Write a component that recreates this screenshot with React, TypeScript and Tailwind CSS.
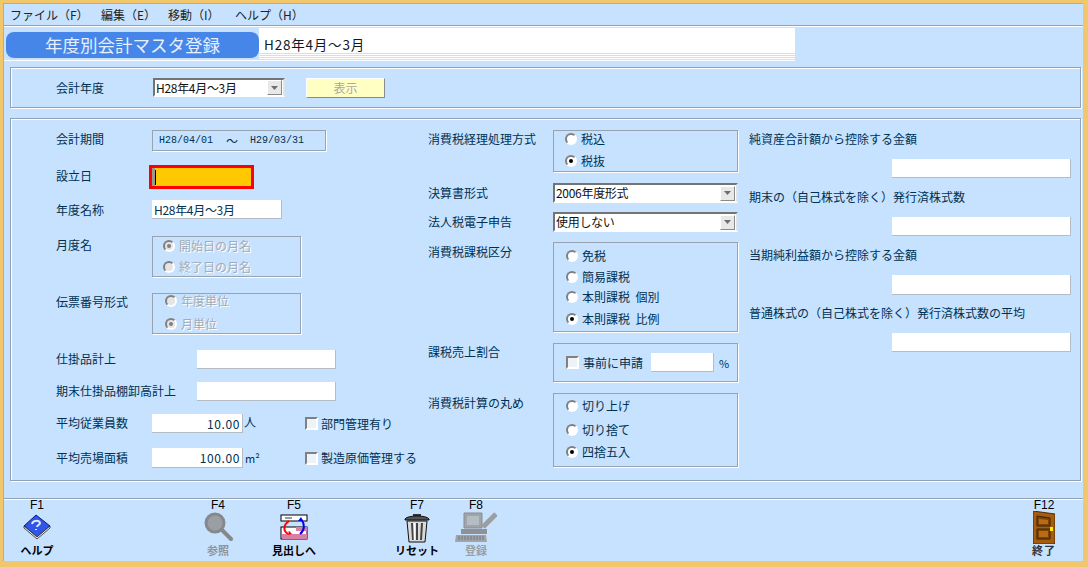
import React from "react";

const jp = "font-['Noto_Sans_CJK_JP',sans-serif]";

const Radio = ({ on = false, off = false }: { on?: boolean; off?: boolean }) => (
  <span
    className={`flex h-[12px] w-[12px] shrink-0 items-center justify-center rounded-full border-2 border-t-[#808080] border-l-[#808080] border-r-white border-b-white ${
      off ? "bg-[#e4e4e4]" : "bg-white"
    }`}
  >
    {on && (
      <span className={`h-[4px] w-[4px] rounded-full ${off ? "bg-[#808080]" : "bg-black"}`} />
    )}
  </span>
);

const RadioItem = ({
  label,
  on,
  off,
  className = "",
}: {
  label: string;
  on?: boolean;
  off?: boolean;
  className?: string;
}) => (
  <div className={`flex h-[14px] items-center gap-[4px] ${className}`}>
    <Radio on={on} off={off} />
    <span className={off ? "text-[#a3abb3] [text-shadow:1px_1px_0_#ffffff]" : ""}>{label}</span>
  </div>
);

const Check = () => (
  <span className="h-[13px] w-[13px] shrink-0 border-2 border-t-[#808080] border-l-[#808080] border-r-white border-b-white bg-[#eef3f8]" />
);

const Field = ({ className = "", value }: { className?: string; value?: string }) => (
  <div
    className={`flex items-center justify-end bg-white pr-[3px] tracking-[0.6px] shadow-[inset_-1px_-1px_0_#b4bcc6] ${className}`}
  >
    {value}
  </div>
);

const Select = ({ value, className = "" }: { value: string; className?: string }) => (
  <div
    className={`flex items-center border-2 border-t-[#747474] border-l-[#747474] border-r-[#dfe3e8] border-b-white bg-white pl-[1px] pr-[1px] ${className}`}
  >
    <span className="flex-1 leading-[14px] tracking-[-0.3px]">{value}</span>
    <span className="flex h-[15px] w-[15px] items-center justify-center border border-t-white border-l-white border-r-[#8a8a8a] border-b-[#8a8a8a] bg-[#e8e8e8]">
      <svg width="7" height="4" viewBox="0 0 7 4">
        <path d="M0 0h7L3.5 4z" fill="#6e6e6e" />
      </svg>
    </span>
  </div>
);

const Group = ({ className = "", children }: { className?: string; children: React.ReactNode }) => (
  <div className={`flex flex-col border border-[#98a3b0] shadow-[1px_1px_0_#ffffff] ${className}`}>
    {children}
  </div>
);

const BookIcon = () => (
  <svg width="28" height="26" viewBox="0 0 28 26">
    <path d="M1 12 13 1l14 11-13 11z" fill="#2f56e8" stroke="#0b1b78" />
    <path d="M1 12v2l13 11 13-11v-2L14 23z" fill="#f4f4f4" stroke="#222222" strokeWidth="0.8" />
    <path d="M9 10c1-4 7-4 8-1 0 2-3 2-3 4M13 15v1" fill="none" stroke="#e2ebff" strokeWidth="2" />
  </svg>
);

const SearchIcon = () => (
  <svg width="30" height="30" viewBox="0 0 30 30">
    <circle cx="12" cy="11" r="9" fill="#9a9fa3" stroke="#85898c" strokeWidth="3" />
    <path d="M19 18l9 9" stroke="#85898c" strokeWidth="4" strokeLinecap="round" />
  </svg>
);

const SwapIcon = () => (
  <svg width="28" height="26" viewBox="0 0 28 26">
    <rect x="1" y="1" width="26" height="6" fill="#ffffff" stroke="#000000" />
    <rect x="5" y="3" width="7" height="2" fill="#999999" />
    <rect x="1" y="13" width="26" height="12" fill="#ffffff" stroke="#000000" />
    <rect x="16" y="13" width="11" height="4" fill="#d77fa4" />
    <rect x="2" y="20" width="25" height="5" fill="#d77fa4" />
    <rect x="6" y="17" width="5" height="3" fill="#dddddd" />
    <path d="M9 7C3 11 3 17 8 20" fill="none" stroke="#ff0000" strokeWidth="2" />
    <path d="M8 21l1-4 3 3z" fill="#ff0000" />
    <path d="M20 20c5-4 5-10 1-15" fill="none" stroke="#0000ee" strokeWidth="2" />
    <path d="M21 3l-3 4 5 0z" fill="#0000ee" />
  </svg>
);

const TrashIcon = () => (
  <svg width="26" height="31" viewBox="0 0 26 31">
    <path d="M9 2h8v2H9z" fill="#333333" />
    <path d="M1 7c2-4 22-4 24 0v1H1z" fill="#555555" stroke="#111111" />
    <path d="M3 9h20l-2 21H5z" fill="#d9d9d9" stroke="#111111" />
    <path d="M8 11l1 17M13 11v17M18 11l-1 17" stroke="#444444" strokeWidth="2" />
    <path d="M10.5 11v17" stroke="#ffffff" strokeWidth="1.5" />
  </svg>
);

const PcIcon = () => (
  <svg width="42" height="32" viewBox="0 0 42 32">
    <path d="M9 2h18v15H9z" fill="#a0a4a8" stroke="#8a8e92" />
    <path d="M12 5h12v9H12z" fill="#b4bcc4" />
    <path d="M28 16 41 3" stroke="#9a9ea2" strokeWidth="5" />
    <path d="M6 18h26v5H6z" fill="#8e9296" />
    <path d="M1 24h30l1 7H0z" fill="#a0a4a8" />
    <path d="M3 26h26M3 28h26" stroke="#74787c" strokeDasharray="2 1" />
  </svg>
);

const DoorIcon = () => (
  <svg width="22" height="33" viewBox="0 0 22 33">
    <path d="M0 0l22 3v30H0z" fill="#a65c0c" stroke="#4a2a07" />
    <path d="M4 5l13 2v8H4zM4 18h13v10H4z" fill="#7f430a" stroke="#3d2206" />
    <path d="M6 8l9 1v4H6zM6 20h9v6H6z" fill="#b96d12" />
    <rect x="17" y="16" width="3" height="4" fill="#ffee00" />
  </svg>
);

const FKey = ({
  fkey,
  label,
  icon,
  className = "",
  labelClass = "text-black",
}: {
  fkey: string;
  label: string;
  icon: React.ReactNode;
  className?: string;
  labelClass?: string;
}) => (
  <div className={`flex w-[56px] flex-col items-center ${className}`}>
    <div className="h-[10px] font-['Liberation_Sans_Narrow','Liberation_Sans',sans-serif] text-[12px] leading-[10px] text-black">
      {fkey}
    </div>
    <div className="flex h-[34px] items-center justify-center">{icon}</div>
    <div className={`h-[13px] whitespace-nowrap text-[11px] font-bold leading-[13px] ${labelClass}`}>
      {label}
    </div>
  </div>
);

export default function App() {
  return (
    <div className={`${jp} h-[567px] w-[1088px] overflow-hidden bg-[#f2c66b] pb-[6px] pl-[3px] pr-[5px] pt-[3px] text-[12px] leading-[14px] text-[#00304f]`}>
      <div className="flex h-[558px] w-[1080px] flex-col border-l border-t border-[#c9ad62] bg-[#c7e2ff]">
        {/* menu */}
        <div className="flex h-[21px] shrink-0 items-center pl-[6px] text-[#222222]">
          <span className="w-[91px]">ファイル（F）</span>
          <span className="w-[67px]">編集（E）</span>
          <span className="w-[67px]">移動（I）</span>
          <span>ヘルプ（H）</span>
        </div>
        <div className="h-px shrink-0 bg-[#93a2b2]" />
        <div className="h-px shrink-0 bg-white" />

        {/* title band */}
        <div className="mt-px flex h-[32px] w-[791px] shrink-0 items-start pl-[2px]">
          <div className="mt-[4px] flex h-[26px] w-[253px] shrink-0 items-center justify-center rounded-lg bg-[#4686e8] text-[17.5px] leading-[26px] text-[#e6efff]">
            年度別会計マスタ登録
          </div>
          <div className="flex flex-1 flex-col">
            <div className="flex h-[25px] items-center bg-white pl-[5px] pt-[7px] text-[13.5px] leading-[18px] tracking-[0.8px] text-[#101828]">
              H28年4月～3月
            </div>
            <div className="mt-px h-px bg-white" />
            <div className="mt-px h-px bg-white" />
            <div className="mt-px h-px bg-white" />
          </div>
        </div>
        <div className="h-px w-[791px] shrink-0 bg-white" />

        {/* fiscal year */}
        <div className="ml-[6px] mt-[6px] flex h-[41px] w-[1071px] shrink-0 items-center border border-[#93a2b2] pl-[45px] shadow-[inset_1px_1px_0_#ffffff,1px_1px_0_#ffffff]">
          <span className="w-[97px]">会計年度</span>
          <Select value="H28年4月～3月" className="h-[19px] w-[132px] text-[#101010]" />
          <div className="ml-[21px] flex h-[20px] w-[79px] items-center justify-center border border-t-white border-l-white border-r-[#8b8b8b] border-b-[#8b8b8b] bg-[#ffffc4] text-[#a8a8a8]">
            表示
          </div>
        </div>

        {/* main form */}
        <div className="ml-[6px] mt-[10px] flex h-[363px] w-[1071px] shrink-0 border border-[#93a2b2] pl-[45px] pt-[11px] shadow-[inset_1px_1px_0_#ffffff,1px_1px_0_#ffffff]">
          {/* left column */}
          <div className="flex w-[372px] shrink-0 flex-col">
            <div className="flex h-[21px] items-center">
              <span className="mb-[3px] w-[96px]">会計期間</span>
              <div className="flex h-[21px] w-[174px] items-center border border-[#98a3b0] pl-[6px] font-['Liberation_Mono',monospace] text-[10px] shadow-[1px_1px_0_#ffffff]">
                <span>H28/04/01</span>
                <span className={`${jp} ml-[13px] text-[12px]`}>～</span>
                <span className="ml-[12px]">H29/03/31</span>
              </div>
            </div>
            <div className="mt-[14px] flex h-[24px] items-center">
              <span className="mb-[3px] w-[93px]">設立日</span>
              <div className="flex h-[24px] w-[105px] items-center border-[3px] border-[#ff0000] bg-[#ffc800]">
                <span className="h-full w-[3px] bg-[#9a9a8a]" />
                <span className="h-[15px] w-px bg-black" />
              </div>
            </div>
            <div className="mt-[11px] flex h-[19px] items-center">
              <span className="w-[96px]">年度名称</span>
              <div className="flex h-[19px] w-[130px] items-center bg-white pl-[2px] tracking-[-0.3px] shadow-[inset_-1px_-1px_0_#b4bcc6]">
                H28年4月～3月
              </div>
            </div>
            <div className="mt-[17px] flex h-[41px] items-start">
              <span className="mt-[2px] w-[96px]">月度名</span>
              <Group className="h-[41px] w-[149px] pl-[10px]">
                <RadioItem label="開始日の月名" on off className="mt-[2px]" />
                <RadioItem label="終了日の月名" off className="mt-[7px]" />
              </Group>
            </div>
            <div className="mt-[16px] flex h-[41px] items-start">
              <span className="mt-[2px] w-[96px]">伝票番号形式</span>
              <Group className="h-[41px] w-[149px] pl-[12px]">
                <RadioItem label="年度単位" off />
                <RadioItem label="月単位" on off className="mt-[9px]" />
              </Group>
            </div>
            <div className="mt-[16px] flex h-[19px] items-center">
              <span className="mb-[2px] w-[141px]">仕掛品計上</span>
              <Field className="h-[19px] w-[139px]" />
            </div>
            <div className="mt-[13px] flex h-[19px] items-center">
              <span className="mb-[2px] w-[141px]">期末仕掛品棚卸高計上</span>
              <Field className="h-[19px] w-[139px]" />
            </div>
            <div className="mt-[13px] flex h-[19px] items-center">
              <span className="mb-[2px] w-[96px]">平均従業員数</span>
              <Field className="h-[19px] w-[91px]" value="10.00" />
              <span className="mb-[3px] ml-[1px] w-[61px]">人</span>
              <Check />
              <span className="ml-[3px]">部門管理有り</span>
            </div>
            <div className="mt-[15px] flex h-[20px] items-center">
              <span className="w-[96px]">平均売場面積</span>
              <Field className="h-[20px] w-[91px]" value="100.00" />
              <span className="ml-[2px] w-[60px] text-[11px]">m²</span>
              <Check />
              <span className="ml-[3px]">製造原価管理する</span>
            </div>
          </div>

          {/* middle column */}
          <div className="flex w-[321px] shrink-0 flex-col">
            <div className="flex h-[42px] items-start">
              <span className="mt-[2px] w-[125px]">消費税経理処理方式</span>
              <Group className="h-[42px] w-[185px] pl-[11px]">
                <RadioItem label="税込" className="mt-px" />
                <RadioItem label="税抜" on className="mt-[8px]" />
              </Group>
            </div>
            <div className="mt-[11px] flex h-[20px] items-center">
              <span className="w-[125px]">決算書形式</span>
              <Select value="2006年度形式" className="h-[20px] w-[185px] text-[#101010]" />
            </div>
            <div className="mt-[9px] flex h-[20px] items-center">
              <span className="w-[125px]">法人税電子申告</span>
              <Select value="使用しない" className="h-[20px] w-[185px] text-[#101010]" />
            </div>
            <div className="mt-[10px] flex h-[90px] items-start">
              <span className="mt-[3px] w-[125px]">消費税課税区分</span>
              <Group className="h-[90px] w-[185px] pl-[12px]">
                <RadioItem label="免税" className="mt-[6px]" />
                <RadioItem label="簡易課税" className="mt-[7px]" />
                <RadioItem label="本則課税  個別" className="mt-[6px] whitespace-pre" />
                <RadioItem label="本則課税  比例" on className="mt-[8px] whitespace-pre" />
              </Group>
            </div>
            <div className="mt-[11px] flex h-[39px] items-start">
              <span className="mt-[2px] w-[125px]">課税売上割合</span>
              <Group className="h-[39px] w-[185px] flex-row items-center pl-[12px]">
                <Check />
                <span className="ml-[4px] w-[68px]">事前に申請</span>
                <Field className="h-[19px] w-[63px]" />
                <span className="ml-[5px] text-[11px]">%</span>
              </Group>
            </div>
            <div className="mt-[11px] flex h-[74px] items-start">
              <span className="mt-[3px] w-[125px]">消費税計算の丸め</span>
              <Group className="h-[74px] w-[185px] pl-[12px]">
                <RadioItem label="切り上げ" className="mt-[5px]" />
                <RadioItem label="切り捨て" className="mt-[10px]" />
                <RadioItem label="四捨五入" on className="mt-[8px]" />
              </Group>
            </div>
          </div>

          {/* right column */}
          <div className="mt-[2px] flex flex-1 flex-col">
            <span>純資産合計額から控除する金額</span>
            <Field className="ml-[143px] mt-[13px] h-[19px] w-[179px]" />
            <span className="mt-[12px]">期末の（自己株式を除く）発行済株式数</span>
            <Field className="ml-[143px] mt-[13px] h-[19px] w-[179px]" />
            <span className="mt-[12px]">当期純利益額から控除する金額</span>
            <Field className="ml-[143px] mt-[13px] h-[20px] w-[179px]" />
            <span className="mt-[11px]">普通株式の（自己株式を除く）発行済株式数の平均</span>
            <Field className="ml-[143px] mt-[13px] h-[19px] w-[179px]" />
          </div>
        </div>

        {/* function keys */}
        <div className="mt-[17px] h-px shrink-0 bg-[#93a2b2]" />
        <div className="h-px shrink-0 bg-white" />
        <div className="flex flex-1 items-start">
          <FKey fkey="F1" label="ヘルプ" icon={<BookIcon />} className="ml-[5px]" />
          <FKey fkey="F4" label="参照" icon={<SearchIcon />} className="ml-[125px]" labelClass="text-[#8f9499]" />
          <FKey fkey="F5" label="見出しへ" icon={<SwapIcon />} className="ml-[20px]" />
          <FKey fkey="F7" label="リセット" icon={<TrashIcon />} className="ml-[67px]" />
          <FKey fkey="F8" label="登録" icon={<PcIcon />} className="ml-[3px]" labelClass="text-[#9aa0a5]" />
          <FKey fkey="F12" label="終了" icon={<DoorIcon />} className="ml-[512px]" labelClass="tracking-[1px] text-[#333333]" />
        </div>
      </div>
    </div>
  );
}
